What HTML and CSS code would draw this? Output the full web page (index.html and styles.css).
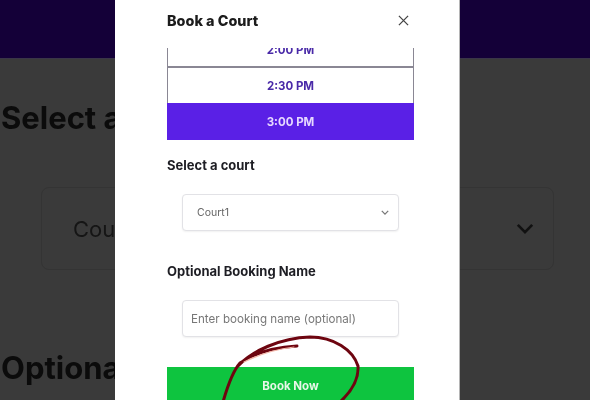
FILE: index.html
```html
<!DOCTYPE html>
<html lang="en">
<head>
<meta charset="utf-8">
<title>Book a Court</title>
<link rel="stylesheet" href="styles.css">
</head>
<body>
<div class="stage">
  <div class="page">
    <div class="page-header"></div>
    <h2 class="page-label">Select a court</h2>
    <div class="page-select"><span>Court1</span>
      <svg class="page-chevron" viewBox="0 0 20 12"><path d="M2 2l8 8 8-8"/></svg>
    </div>
    <h2 class="page-label page-label-second">Optional Booking Name</h2>
  </div>
  <div class="modal">
    <div class="modal-head">
      <h1 class="modal-title">Book a Court</h1>
      <svg class="close" viewBox="0 0 12 12"><path d="M1 1l10 10M11 1L1 11"/></svg>
    </div>
    <div class="times">
      <div class="time">2:00 PM</div>
      <div class="time time-open">2:30 PM</div>
      <div class="time time-active">3:00 PM</div>
    </div>
    <div class="label label-court">Select a court</div>
    <div class="field field-select"><span>Court1</span>
      <svg class="chevron" viewBox="0 0 10 6"><path d="M1 1l4 4 4-4"/></svg>
    </div>
    <div class="label label-name">Optional Booking Name</div>
    <div class="field field-input"><span>Enter booking name (optional)</span></div>
    <button class="book">Book Now</button>
  </div>
  <svg class="scribble" viewBox="0 0 590 400">
    <path class="ink" d="M297 346C278 347 256 352 240 363C232 372 227 388 223 402M238 366C252 351 280 338 310 337C334 337 353 350 358 366C359 380 351 392 340 402"/>
    <path class="ink-light" d="M244 362C260 354 278 349 294 347"/>
  </svg>
</div>
</body>
</html>
```
FILE: styles.css
```css
* { box-sizing: border-box; }
html, body { margin: 0; padding: 0; }
body { width: 590px; height: 400px; overflow: hidden; background: #3a3a3a; font-family: Inter, "Liberation Sans", sans-serif; }
.stage { position: relative; width: 590px; height: 400px; overflow: hidden; filter: blur(0.75px); }
.page { height: 400px; background: #3a3a3a; color: #0b0b0b; overflow: hidden; }
.page-header { height: 59px; background: #140038; border-bottom: 1px solid #3a3548; }
.page-label { margin: 40px 0 0 1px; font-size: 31px; line-height: 38px; font-weight: 700; white-space: nowrap; }
.page-select { display: flex; align-items: center; justify-content: space-between; margin: 50px 36px 0 41px; height: 83px; padding: 0 19px 0 31px; border: 1px solid #343434; border-radius: 8px; font-size: 22px; color: #151515; }
.page-chevron { width: 18px; height: 11px; }
.page-chevron path { fill: none; stroke: #111; stroke-width: 3; }
.page-label-second { margin-top: 79px; }
.modal { position: absolute; left: 115px; top: 0; width: 345px; height: 400px; padding: 0 45px 0 52px; background: #fff; border-right: 1px solid #b5b5b5; overflow: hidden; }
.modal-head { display: flex; align-items: center; justify-content: space-between; height: 48px; padding: 0 5px 7px 0; }
.modal-title { margin: 0; font-size: 14.4px; line-height: 18px; font-weight: 800; color: #1c1c1c; }
.close { width: 11px; height: 11px; }
.close path { fill: none; stroke: #444; stroke-width: 1.4; }
.times { display: flex; flex-direction: column; justify-content: flex-end; height: 92px; overflow: hidden; }
.time { flex: none; height: 35px; display: flex; align-items: center; justify-content: center; font-size: 11.5px; font-weight: 700; color: #4a2aa8; background: #fff; border: 1px solid #8a8794; border-width: 0 1px 2px; }
.time-open { border-bottom: 0; height: 35px; }
.time-active { height: 37px; background: #5a20e6; color: #e6d8ff; border: 0; }
.label { font-size: 13px; line-height: 16px; font-weight: 700; color: #1e1e24; }
.label-court { margin-top: 17px; }
.label-name { margin-top: 32px; }
.field { display: flex; align-items: center; justify-content: space-between; width: 217px; height: 37px; margin-left: 15px; padding: 0 9px 0 14px; background: #fff; border: 1px solid #e2e2e6; border-radius: 4px; box-shadow: 0 1px 2px rgba(0,0,0,.06); font-size: 10.5px; color: #666; }
.field-select { margin-top: 21px; }
.field-input { margin-top: 21px; padding-left: 8px; font-size: 11.6px; color: #777; }
.chevron { width: 8px; height: 5px; }
.chevron path { fill: none; stroke: #777; stroke-width: 1.6; }
.book { display: block; width: 247px; height: 50px; margin-top: 30px; padding: 0 0 12px; border: 0; background: #0ec43f; color: #e8f7e8; font: 700 11.5px Inter, "Liberation Sans", sans-serif; }
.scribble { position: absolute; left: 0; top: 0; width: 590px; height: 400px; }
.ink { fill: none; stroke: #6e0510; stroke-width: 3; stroke-linecap: round; }
.ink-light { fill: none; stroke: #f4b7a8; stroke-width: 1.2; stroke-linecap: round; }
```
